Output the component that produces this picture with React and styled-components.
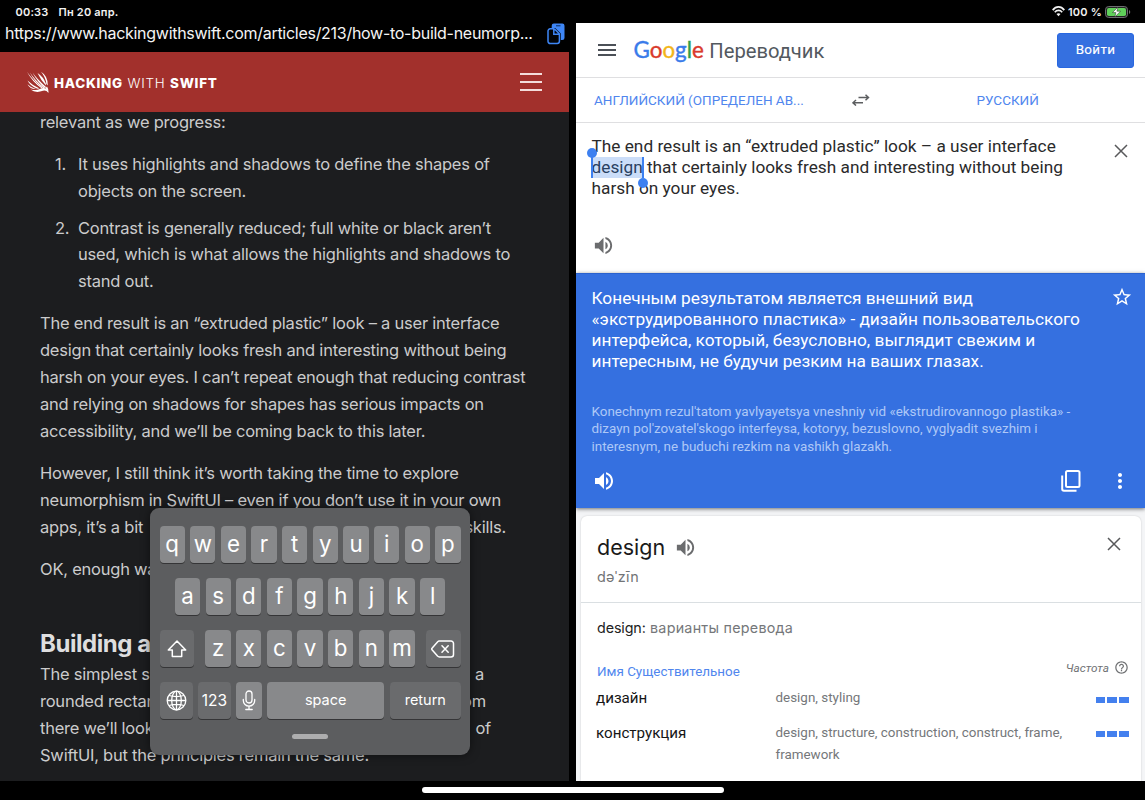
import React from 'react';
import styled, { createGlobalStyle, css } from 'styled-components';
import { MdVolumeUp, MdStarBorder, MdMoreVert, MdHelpOutline } from 'react-icons/md';

const Global = createGlobalStyle`
  * { box-sizing: border-box; }
  html, body { margin: 0; background: #000; }
  body { font-family: Inter, "Liberation Sans", sans-serif; overflow: hidden; }
  svg { display: block; }
`;

const Screen = styled.div`
  position: relative; display: flex; flex-direction: column;
  width: 1145px; height: 800px; overflow: hidden; background: #000;
`;
const StatusBar = styled.div`
  height: 23px; flex: none; display: flex; align-items: center; padding: 0 14px 0 15.5px;
  color: #f2f2f2; font-size: 11px; font-weight: 600; letter-spacing: 0.2px; white-space: pre;
`;
const StatusDate = styled.span`margin-left: 10px;`;
const StatusRight = styled.div`margin-left: auto; display: flex; align-items: center; gap: 3px;`;
const Split = styled.div`flex: none; height: 758px; display: flex; justify-content: space-between;`;
const HomeArea = styled.div`flex: 1; display: flex; justify-content: center; padding-top: 6px;`;
const HomeIndicator = styled.div`width: 302px; height: 6px; border-radius: 3px; background: #fff;`;

/* Browser pane */
const Browser = styled.div`position: relative; width: 569px; display: flex; flex-direction: column; background: #1c1d1f;`;
const UrlBar = styled.div`
  height: 29px; flex: none; background: #000; color: #f4f4f4; display: flex; align-items: flex-start;
  padding: 0 4px 0 5px; justify-content: space-between; font-size: 16px; line-height: 20px; letter-spacing: -0.28px; white-space: nowrap;
`;
const SiteHeader = styled.div`
  height: 60px; flex: none; background: #a2302c; color: #fff; display: flex; align-items: center; padding: 0 27px;
`;
const SiteName = styled.div`
  margin-left: 5px; padding-top: 1px; font-size: 13.4px; font-weight: 800; letter-spacing: 0.74px; white-space: nowrap; flex: 1; word-spacing: 1px;
`;
const Thin = styled.span`font-weight: 300;`;
const SiteMenu = styled.div`
  width: 22px; height: 17.5px; display: flex; flex-direction: column; justify-content: space-between;
`;
const MenuLine = styled.div`height: 1.5px; background: #f4dcdb;`;

const Article = styled.div`
  flex: 1; min-height: 0; overflow: hidden; color: #cbcbcc; font-size: 16.5px; line-height: 26.9px;
  letter-spacing: -0.23px; padding: 0 40px; white-space: nowrap;
`;
const Para = styled.p`margin: 0 0 ${p => p.$gap ?? 15.2}px; ${p => p.$first && css`margin-top: -3px;`}`;
const Points = styled.ol`margin: 0 0 15.2px; padding: 0; list-style: none;`;
const Point = styled.li`display: flex; margin-bottom: ${p => (p.$last ? 0 : 9.3)}px;`;
const PointNumber = styled.span`width: 38px; padding-left: 15px; flex: none;`;
const Line = styled.div`
  ${p => p.$width && css`display: flex; justify-content: space-between; width: ${p.$width}px;`}
`;
const Heading = styled.h2`
  margin: 45px 0 1px; font-size: 24px; line-height: 32px; font-weight: 700; letter-spacing: -0.45px; color: #dededf;
`;

/* Floating keyboard */
const Keyboard = styled.div`
  position: absolute; left: 150px; top: 485px; width: 320px; height: 247px; border-radius: 9px;
  background: #5c5d5f; box-shadow: 0 0 10px rgba(0,0,0,0.5); padding: 18px 9.5px 0; display: flex; flex-direction: column; gap: 15px;
`;
const KeyRow = styled.div`display: flex; gap: 5.4px; height: 37px; padding: 0 ${p => p.$inset || 0}px; justify-content: space-between;`;
const KeyGroup = styled.div`display: flex; gap: 5.4px;`;
const Key = styled.div`
  width: ${p => p.$w || 25.25}px; height: 37px; border-radius: 4px; flex: none; color: #fff;
  background: ${p => (p.$dark ? '#6a6b6d' : '#88898b')}; box-shadow: 0 1px 0.5px rgba(40,40,42,0.75);
  display: flex; align-items: center; justify-content: center;
  font-size: ${p => p.$size || 22.3}px; font-weight: 400; padding-bottom: ${p => p.$lift ?? 3}px;
`;
const Grip = styled.div`width: 36px; height: 5px; border-radius: 3px; background: #adadae; align-self: center;`;

/* Translator pane */
const Translator = styled.div`
  width: 569px; display: flex; flex-direction: column; background: #fff; font-family: Roboto, "Noto Sans", sans-serif; white-space: nowrap; overflow: hidden;
`;
const AppBar = styled.div`
  height: 55px; flex: none; display: flex; align-items: center; padding: 0 11px 0 22px; border-bottom: 1px solid #dfdfe1;
`;
const Burger = styled.div`width: 18px; height: 12px; display: flex; flex-direction: column; justify-content: space-between;`;
const BurgerLine = styled.div`height: 1.6px; background: #4b5057;`;
const Wordmark = styled.div`
  margin-left: 17.5px; font-family: Lato, sans-serif; font-size: 22.4px; font-weight: 400; line-height: 28px;
  -webkit-text-stroke: 0.4px currentColor;
`;
const Tint = styled.span`color: ${p => p.$c};`;
const Product = styled.div`margin-left: 5.5px; font-size: 20.2px; color: #53595f; flex: 1; padding-top: 2px;`;
const SignIn = styled.button`
  width: 77px; height: 35px; border: 1px solid #2867e0; border-radius: 3px; background: #3570e0; color: #fff; padding: 0 0 1px;
  font: 400 13.4px Roboto, sans-serif; letter-spacing: 0.35px; -webkit-text-stroke: 0.15px #fff;
`;
const Languages = styled.div`
  height: 45px; flex: none; display: flex; align-items: center; border-bottom: 1px solid #dfdfe1; color: #5086ee; font-size: 13.5px;
`;
const Lang = styled.div`${p => (p.$target ? 'margin-left: 106.5px;' : 'margin-left: 18px; width: 258px;')}`;
const Source = styled.div`
  height: 150px; flex: none; display: flex; justify-content: space-between; padding: 13px 17px 0 15.5px; color: #2a2a2b;
  font-size: 17.25px; line-height: 21.2px;
`;
const SourceBody = styled.div`height: 121px; display: flex; flex-direction: column; justify-content: space-between; align-items: flex-start;`;
const Selection = styled.span`position: relative; display: inline-block; height: 21.2px; background: #cbddf8; color: #29405f;`;
const Handle = styled.span`
  position: absolute; top: 0; bottom: 0; width: 2px; background: #3d80f0; ${p => (p.$end ? 'right: -1px;' : 'left: -1px;')}
  &::after {
    content: ''; position: absolute; left: -4px; width: 10px; height: 10px; border-radius: 50%; background: #3d80f0;
    ${p => (p.$end ? 'bottom: -10px;' : 'top: -9px;')}
  }
`;
const IconSlot = styled.div`color: ${p => p.$c || '#6b6c6e'}; ${p => p.$mt && css`margin-top: ${p.$mt}px;`} ${p => p.$ml && css`margin-left: ${p.$ml}px;`}`;

const Result = styled.div`
  position: relative; height: 235px; flex: none; background: #3570e0; color: #fff; border-top: 1px solid #2a62cf; display: flex; flex-direction: column;
  padding: 13.5px 13px 0 15.5px; box-shadow: 0 1px 4px rgba(0,0,0,0.55);
`;
const ResultTop = styled.div`display: flex; justify-content: space-between; font-size: 17.25px; line-height: 21.2px; margin-right: -1px;`;
const Translit = styled.div`margin-top: 30.5px; font-size: 13.42px; line-height: 17.5px; color: #aec8f7;`;
const Actions = styled.div`display: flex; align-items: center; margin-top: 14px; height: 24px;`;
const Spacer = styled.div`flex: 1;`;

const Details = styled.div`flex: 1; background: #f4f5f7; padding: 8px 4px 0 5px; display: flex;`;
const Card = styled.div`
  flex: 1; background: #fff; border-radius: 6px 6px 0 0; box-shadow: 0 0 2px rgba(0,0,0,0.18);
`;
const CardHead = styled.div`height: 87px; border-bottom: 1px solid #dadfe2; padding: 16px 20px 0 16px; display: flex; justify-content: space-between;`;
const Word = styled.div`font: 400 21.5px/30px Inter, sans-serif; color: #1a1a1a; display: flex; align-items: center;`;
const Phonetic = styled.div`font: 400 14.4px/20px Inter, "DejaVu Sans", sans-serif; color: #727476; margin-top: 4.5px; letter-spacing: 0.3px;`;
const Variants = styled.div`
  padding: 15px 0 0 16px; font: 400 14.3px/20px Inter, sans-serif; letter-spacing: 0.26px; color: #75777a;
`;
const Strong = styled.span`color: #222; letter-spacing: -0.1px;`;
const GroupHead = styled.div`display: flex; justify-content: space-between; align-items: center; height: 20px; margin: 22px 12px 0 16px;`;
const PartOfSpeech = styled.div`color: #5086ee; font-size: 13.4px; padding-top: 3px;`;
const Frequency = styled.div`display: flex; align-items: center; gap: 5px; color: #707274; font-size: 11.8px; font-style: italic; margin-top: -5px;`;
const Entry = styled.div`display: grid; grid-template-columns: 179.5px 1fr 33px; margin: ${p => p.$mt}px 12.5px 0 15px; line-height: 22.7px;`;
const Term = styled.div`font-size: 15.15px; color: #161616;`;
const Meanings = styled.div`font-size: 13.42px; color: #75777a;`;
const Meter = styled.div`display: flex; gap: 2px; padding-top: 9.5px;`;
const MeterBar = styled.div`width: 9.7px; height: 6px; background: #4480ee;`;

const Wifi = () => (
  <svg width="13" height="11" viewBox="0 0 13 11" fill="none" stroke="#f2f2f2" strokeWidth="1.7">
    <path d="M.7 4.1C4-.1 9-.1 12.3 4.1M2.8 6.2c2-2.4 5.4-2.4 7.4 0" /><path d="M6.5 10.2 4.5 8.1c1.2-1.2 2.8-1.2 4 0z" fill="#f2f2f2" stroke="none" />
  </svg>
);
const Battery = () => (
  <svg width="26" height="12" viewBox="0 0 26 12">
    <rect x=".5" y=".5" width="22" height="11" rx="3.2" fill="#222" stroke="#6d6d6f" />
    <rect x="2" y="2" width="19" height="8" rx="1.8" fill="#60d05a" />
    <path d="M24 4v4c1.7-.6 1.7-3.4 0-4z" fill="#6d6d6f" />
    <path d="M13 1 7.5 6.6h3.4L9.8 11l5.7-5.8h-3.6z" fill="#fff" stroke="#222" strokeWidth=".5" />
  </svg>
);
const Clipboard = () => (
  <svg width="18" height="22" viewBox="0 0 18 22">
    <rect x="4.700" y=".5" width="12.800" height="16.500" rx="2.200" fill="#3e86f6" />
    <path d="M9 2.800h4.500" stroke="#0b2857" strokeWidth="1" />
    <path d="M3 5h5.200l5.600 5.600v8.200a2.200 2.200 0 0 1-2.200 2.200H3A2.200 2.200 0 0 1 .8 18.800V7.200A2.200 2.200 0 0 1 3 5z" fill="#02050a" />
    <path d="M3.200 5.800h3.600v5.400h5.600v7.100a2.200 2.200 0 0 1-2.200 2.200h-7A2.200 2.200 0 0 1 1 18.300V8a2.200 2.200 0 0 1 2.200-2.200zM7.500 6l5 5" fill="none" stroke="#3e86f6" strokeWidth="1.500" />
  </svg>
);
const SwiftMark = () => (
  <svg width="22" height="22" viewBox="0 0 22 22" fill="#fff">
    <path d="M0 .8Q6 9.500 15.500 16.800L14.500 17.300Q5 10.500 0 .8z" />
    <path d="M5.500 1.500Q10 8 19 16l-.8 1.300Q10 10.500 5.500 1.500z" />
    <path d="M3 1.500Q8 9.500 17.500 16.800l-.7.700Q7 10.500 3 1.500z" />
    <path d="M14 .8Q21 5 20.800 14.500L19.400 13Q18.500 6 14 .8z" />
    <path d="M10.500 2Q16.500 6 18.800 12.500l.2 2Q14 9.500 10.500 2z" />
    <path d="M.5 9.500Q5 14 12.500 17.500l-2 .3Q3 15 .5 9.500z" />
    <path d="M.5 13.200q3.200 3.300 8.500 4.900-6 .2-8.500-4.900z" />
    <path d="M3.500 18.500q6 1.300 9.300-.6 4-2 6.700.1 2 1.500 2 4-2.500-3.200-5.500-2.200-7.500 2.700-12.500-1.300z" />
    <path d="M20 15.500q1.700 2.500 1.500 6L18.500 17z" />
  </svg>
);
const Swap = () => (
  <svg width="18" height="12" viewBox="0 0 18 12" fill="none" stroke="#5c5e60" strokeWidth="1.500">
    <path d="M6.500 3.500h10M13.500.700l3 2.800-3 2.800M11 8.800H1M4 6 1 8.800l3 2.700" />
  </svg>
);
const Cross = () => (
  <svg width="14" height="14" viewBox="0 0 14 14" fill="none" stroke="#58595b" strokeWidth="1.500"><path d="m1 1 12 12M13 1 1 13" /></svg>
);
const CopyIcon = () => (
  <svg width="20" height="22" viewBox="0 0 20 22" fill="none" stroke="#fff" strokeWidth="2">
    <rect x="5" y="1" width="13.500" height="16" rx="1.500" /><path d="M1.200 5.500V19a1.800 1.800 0 0 0 1.800 1.800h12.500" />
  </svg>
);
const Shift = () => (
  <svg width="20" height="20" viewBox="0 0 20 20" fill="none" stroke="#fff" strokeWidth="1.500" strokeLinejoin="round">
    <path d="M10 2 1.300 11h4v6.500h9.400V11h4z" />
  </svg>
);
const Delete = () => (
  <svg width="24" height="18" viewBox="0 0 24 18" fill="none" stroke="#fff" strokeWidth="1.500" strokeLinejoin="round" strokeLinecap="round">
    <path d="M8 1h12a2.500 2.500 0 0 1 2.500 2.500v11A2.500 2.500 0 0 1 20 17H8.500a3 3 0 0 1-2-.9L1 9.700a1 1 0 0 1 0-1.400L6.500 1.900A3 3 0 0 1 8 1zM11 5.800l6.200 6.400M17.200 5.800 11 12.200" />
  </svg>
);
const Globe = () => (
  <svg width="21" height="21" viewBox="0 0 21 21" fill="none" stroke="#fff" strokeWidth="1.300">
    <circle cx="10.500" cy="10.500" r="9.300" /><ellipse cx="10.500" cy="10.500" rx="4.800" ry="9.300" />
    <path d="M10.500 1.200v18.600M1.200 10.500h18.600M3 5.500q7.500 2.200 15 0M3 15.500q7.500-2.200 15 0" />
  </svg>
);
const Mic = () => (
  <svg width="14" height="21" viewBox="0 0 14 21" fill="none" stroke="#fff" strokeWidth="1.300" strokeLinecap="round">
    <rect x="4" y="1" width="6" height="12" rx="3" /><path d="M1.300 9.500v1a5.700 5.700 0 0 0 11.400 0v-1M7 16.300v3M3.800 19.500h6.400" />
  </svg>
);

const keysFor = s => s.split('').map(k => <Key key={k}>{k}</Key>);

const FloatingKeyboard = () => (
  <Keyboard>
    <KeyRow>{keysFor('qwertyuiop')}</KeyRow>
    <KeyRow $inset={15.4}>{keysFor('asdfghjkl')}</KeyRow>
    <KeyRow>
      <Key $dark $w={34.5} $lift={0}><Shift /></Key>
      <KeyGroup>{keysFor('zxcvbnm')}</KeyGroup>
      <Key $dark $w={34.5} $lift={0}><Delete /></Key>
    </KeyRow>
    <KeyRow>
      <Key $dark $w={33} $lift={0}><Globe /></Key>
      <Key $dark $w={33} $size={15.5} $lift={0}>123</Key>
      <Key $lift={0}><Mic /></Key>
      <Key $w={117.5} $size={14.5} $lift={2}>space</Key>
      <Key $dark $w={71} $size={14.5} $lift={2}>return</Key>
    </KeyRow>
    <Grip />
  </Keyboard>
);

const Frequent = () => <Meter><MeterBar /><MeterBar /><MeterBar /></Meter>;

export default function App() {
  return (
    <Screen>
      <Global />
      <StatusBar>
        <span>00:33</span><StatusDate>Пн 20 апр.</StatusDate>
        <StatusRight><Wifi /><span>100 %</span><Battery /></StatusRight>
      </StatusBar>
      <Split>
        <Browser>
          <UrlBar><span>https://www.hackingwithswift.com/articles/213/how-to-build-neumorp...</span><Clipboard /></UrlBar>
          <SiteHeader>
            <SwiftMark />
            <SiteName>HACKING <Thin>WITH</Thin> SWIFT</SiteName>
            <SiteMenu><MenuLine /><MenuLine /><MenuLine /></SiteMenu>
          </SiteHeader>
          <Article>
            <Para $first $gap={15.5}>relevant as we progress:</Para>
            <Points>
              <Point><PointNumber>1.</PointNumber><div>
                <Line>It uses highlights and shadows to define the shapes of</Line>
                <Line>objects on the screen.</Line>
              </div></Point>
              <Point $last><PointNumber>2.</PointNumber><div>
                <Line>Contrast is generally reduced; full white or black aren’t</Line>
                <Line>used, which is what allows the highlights and shadows to</Line>
                <Line>stand out.</Line>
              </div></Point>
            </Points>
            <Para>
              <Line>The end result is an “extruded plastic” look – a user interface</Line>
              <Line>design that certainly looks fresh and interesting without being</Line>
              <Line>harsh on your eyes. I can’t repeat enough that reducing contrast</Line>
              <Line>and relying on shadows for shapes has serious impacts on</Line>
              <Line>accessibility, and we’ll be coming back to this later.</Line>
            </Para>
            <Para>
              <Line>However, I still think it’s worth taking the time to explore</Line>
              <Line>neumorphism in SwiftUI – even if you don’t use it in your own</Line>
              <Line $width={466}><span>apps, it’s a bit</span><span>skills.</span></Line>
            </Para>
            <Para>OK, enough wa</Para>
            <Heading>Building a</Heading>
            <Para>
              <Line $width={444}><span>The simplest s</span><span>a</span></Line>
              <Line $width={446}><span>rounded rectan</span><span>om</span></Line>
              <Line $width={451}><span>there we’ll look</span><span>of</span></Line>
              <Line>SwiftUI, but the principles remain the same.</Line>
            </Para>
          </Article>
          <FloatingKeyboard />
        </Browser>
        <Translator>
          <AppBar>
            <Burger><BurgerLine /><BurgerLine /><BurgerLine /></Burger>
            <Wordmark>
              <Tint $c="#3a7bea">G</Tint><Tint $c="#d93a2c">o</Tint><Tint $c="#f3b51b">o</Tint><Tint $c="#3a7bea">g</Tint><Tint $c="#2f9e4c">l</Tint><Tint $c="#d93a2c">e</Tint>
            </Wordmark>
            <Product>Переводчик</Product>
            <SignIn>Войти</SignIn>
          </AppBar>
          <Languages><Lang>АНГЛИЙСКИЙ (ОПРЕДЕЛЕН АВ...</Lang><Swap /><Lang $target>РУССКИЙ</Lang></Languages>
          <Source>
            <SourceBody>
              <div>
                <Line>The end result is an “extruded plastic” look – a user interface</Line>
                <Line><Selection>design<Handle /><Handle $end /></Selection> that certainly looks fresh and interesting without being</Line>
                <Line>harsh on your eyes.</Line>
              </div>
              <IconSlot><MdVolumeUp size={23} /></IconSlot>
            </SourceBody>
            <IconSlot $mt={7.5}><Cross /></IconSlot>
          </Source>
          <Result>
            <ResultTop>
              <div>
                <Line>Конечным результатом является внешний вид</Line>
                <Line>«экструдированного пластика» - дизайн пользовательского</Line>
                <Line>интерфейса, который, безусловно, выглядит свежим и</Line>
                <Line>интересным, не будучи резким на ваших глазах.</Line>
              </div>
              <IconSlot $c="#fff" $mt={-2}><MdStarBorder size={22} /></IconSlot>
            </ResultTop>
            <Translit>
              <Line>Konechnym rezul'tatom yavlyayetsya vneshniy vid «ekstrudirovannogo plastika» -</Line>
              <Line>dizayn pol'zovatel'skogo interfeysa, kotoryy, bezuslovno, vyglyadit svezhim i</Line>
              <Line>interesnym, ne buduchi rezkim na vashikh glazakh.</Line>
            </Translit>
            <Actions>
              <IconSlot $c="#fff"><MdVolumeUp size={24} /></IconSlot>
              <Spacer />
              <CopyIcon />
              <IconSlot $c="#fff" $ml={27}><MdMoreVert size={24} /></IconSlot>
            </Actions>
          </Result>
          <Details>
            <Card>
              <CardHead>
                <div>
                  <Word>design<IconSlot $ml={9}><MdVolumeUp size={23} /></IconSlot></Word>
                  <Phonetic>dəˈzīn</Phonetic>
                </div>
                <IconSlot $mt={4.5}><Cross /></IconSlot>
              </CardHead>
              <Variants><Strong>design:</Strong> варианты перевода</Variants>
              <GroupHead>
                <PartOfSpeech>Имя Существительное</PartOfSpeech>
                <Frequency>Частота <MdHelpOutline size={15} /></Frequency>
              </GroupHead>
              <Entry $mt={7}><Term>дизайн</Term><Meanings>design, styling</Meanings><Frequent /></Entry>
              <Entry $mt={12}>
                <Term>конструкция</Term>
                <Meanings><Line>design, structure, construction, construct, frame,</Line><Line>framework</Line></Meanings>
                <Frequent />
              </Entry>
            </Card>
          </Details>
        </Translator>
      </Split>
      <HomeArea><HomeIndicator /></HomeArea>
    </Screen>
  );
}
